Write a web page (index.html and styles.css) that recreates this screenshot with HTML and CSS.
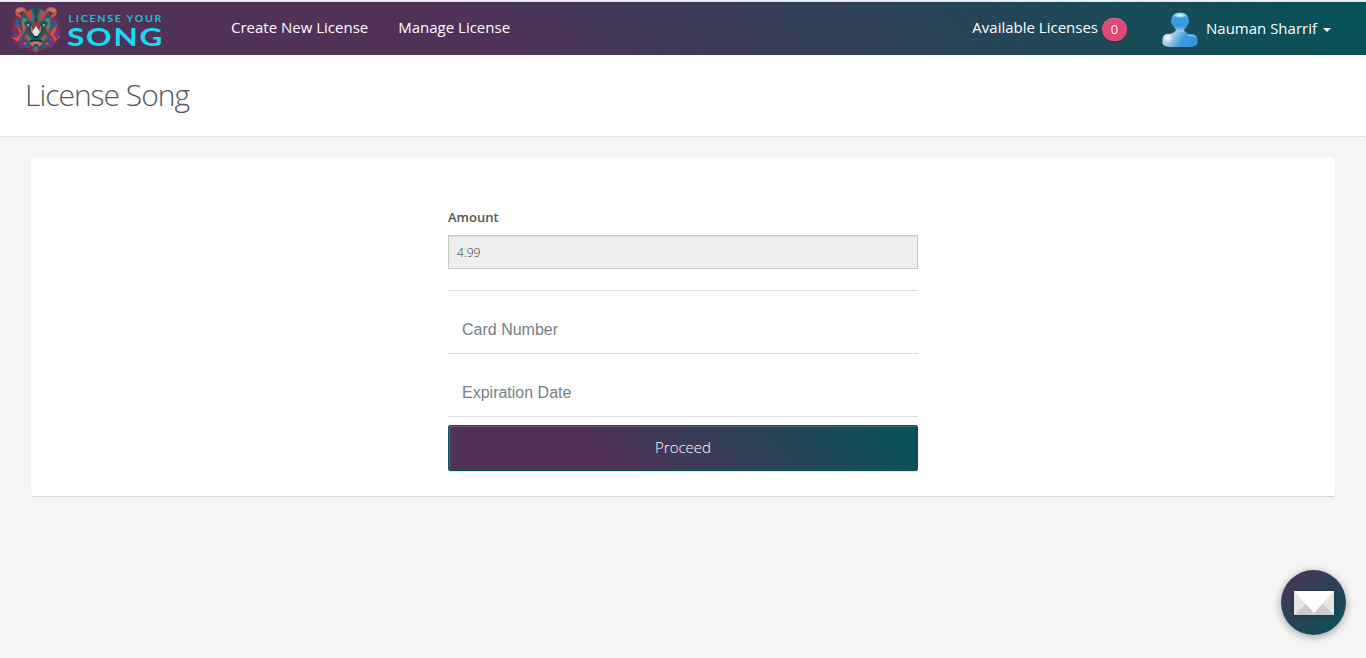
FILE: index.html
```html
<!DOCTYPE html>
<html lang="en">
<head>
<meta charset="utf-8">
<title>License Song</title>
<link rel="stylesheet" href="styles.css">
</head>
<body>
<header class="navbar">
  <a class="brand">
    <svg class="brand-logo" width="160" height="53" viewBox="4 2 160 53">
      <!-- mane -->
      <path fill="#8b294d" d="M17 15L12 21 14 25 11 30 14 33 10 38 16 40 13 44 20 44 18 49 26 47 31 52 36 53 42 51 46 47 53 48 51 44 58 43 56 39 62 37 57 33 61 30 57 26 60 22 55 15Z"/>
      <path fill="#315a8c" d="M17 17L14 25 23 32ZM54 17L58 25 49 32ZM20 37L13 42 25 41ZM49 37L58 42 48 42ZM27 44L21 48 31 48ZM44 45L51 47 40 49Z"/>
      <path fill="#d94b43" d="M15 24L23 33 22 37ZM58 24L49 33 53 38ZM12 38L22 34 18 42ZM60 37L52 31 54 42ZM23 42L21 46 29 43ZM48 42L52 46 43 44Z"/>
      <path fill="#623b8b" d="M11 31L20 34 16 38ZM61 31L53 34 57 39ZM17 44L25 39 22 48ZM55 44L47 39 50 48Z"/>
      <!-- ears -->
      <path fill="#c4544d" d="M16 15Q13 8 20 7 26 7 27 12L20 18ZM56 15Q59 8 52 7 46 7 45 12L52 18Z"/>
      <path fill="#b88682" d="M16 11Q18 7 24 9L19 12ZM56 11Q54 7 48 9L53 12Z"/>
      <path fill="#5b2d43" d="M19 13L24 11 22 17ZM53 13L48 11 50 17Z"/>
      <!-- face -->
      <path fill="#285b68" d="M25 12L32 8 40 8 47 12 52 20 50 35 45 44 36 50 27 44 22 35 20 20Z"/>
      <path fill="#b9483e" d="M31 9L25 13 29 20 35 24ZM41 9L47 13 43 20 37 24ZM21 20L27 27 23 35ZM51 20L45 27 49 35ZM27 33L30 42 24 37ZM45 33L42 42 48 37Z"/>
      <path fill="#35454f" d="M34 9L36 8 38 9 37 24 35 24ZM27 28L31 27 32 36 28 33ZM45 28L41 27 40 36 44 33Z"/>
      <path fill="#459087" d="M22 18L28 19 24 23 25 31 23 28ZM50 18L44 19 48 23 47 31 49 28ZM28 35L31 39 29 42ZM44 35L41 39 43 42Z"/>
      <path fill="#327d87" d="M31 10L35 17 32 22ZM41 10L37 17 40 22Z"/>
      <path fill="#87443e" d="M33 20L36 23 39 20 40 29 36 27 32 29Z"/>
      <path fill="#1c2c35" d="M26 22L32 25 28 27ZM46 22L40 25 44 27ZM32 34L36 36 40 34 38 38 34 38ZM29 41L35 39 36 41 30 42ZM43 41L37 39 36 41 42 42Z"/>
      <path fill="#c7dfda" d="M27 23.500L30 25 28 26.500ZM45 23.500L42 25 44 26.500Z"/>
      <path fill="#d8e7df" d="M36 26L40 32 37.500 36H34.500L32 32Z"/>
      <path fill="#cf6d52" d="M29 43L35 41 33 47ZM43 43L37 41 39 47ZM31 25L33 30 31 33ZM41 25L39 30 41 33Z"/>
      <path fill="#b8a89c" d="M33 43L36 42 39 43 36 44Z"/>
      <path fill="#4b7378" d="M34 47L38 47 38 50 36 52 33 50Z"/>
      <text class="logo-small" transform="translate(68.500 21.500) scale(1.120 1)" textLength="83" lengthAdjust="spacing">LICENSE YOUR</text>
      <text class="logo-large" transform="translate(67 46) scale(1.240 1)" textLength="77" lengthAdjust="spacing">SONG</text>
    </svg>
  </a>
  <nav class="main-links">
    <a>Create New License</a>
    <a>Manage License</a>
  </nav>
  <div class="account">
    <a class="available">Available Licenses<span class="badge">0</span></a>
    <a class="profile">
      <svg class="avatar" width="36" height="36" viewBox="0 0 36 36">
        <defs>
          <linearGradient id="head" x1="0" y1="0" x2="0" y2="1">
            <stop offset="0" stop-color="#8dcaf0"/><stop offset=".3" stop-color="#3d9edc"/><stop offset=".7" stop-color="#3598d9"/><stop offset="1" stop-color="#a5d4f2"/>
          </linearGradient>
          <linearGradient id="torso" x1="0" y1=".2" x2="1" y2=".5">
            <stop offset="0" stop-color="#c7d9f4"/><stop offset=".3" stop-color="#a4c8ee"/><stop offset=".65" stop-color="#3b9bda"/><stop offset="1" stop-color="#3295d7"/>
          </linearGradient>
          <radialGradient id="shine"><stop stop-color="#fff"/><stop offset="1" stop-color="#fff" stop-opacity="0"/></radialGradient>
        </defs>
        <path fill="url(#torso)" d="M13 19Q11 22 6 22 1 22 .5 27V31Q1 35 10 35H26Q35 35 35.500 31V27Q35 22 29 22 24 22 23 19Z"/>
        <path fill="url(#head)" d="M18 .5Q26 .5 26.500 7 28 10 26.500 11.500 25 15 22.500 17 23 20 18 20 13 20 13.500 17 11 14 9.500 11.500 8 10 9.500 7 10 .5 18 .5Z"/>
        <ellipse cx="18" cy="3.500" rx="6.500" ry="2.500" fill="url(#shine)"/>
        <circle cx="6" cy="26" r="5" fill="url(#shine)"/>
        <path d="M26 23.500Q31 22.500 33.500 25" fill="none" stroke="#a9d5f3"/>
      </svg>
      <span class="user-name">Nauman Sharrif</span><span class="caret"></span>
    </a>
  </div>
</header>
<div class="page-title"><h1>License Song</h1></div>
<main class="content">
  <section class="panel">
    <form class="payment">
      <label class="amount-label">Amount</label>
      <input class="amount" value="4.99" readonly>
      <div class="card-field first">Card Number</div>
      <div class="card-field">Expiration Date</div>
      <button class="proceed" type="button">Proceed</button>
    </form>
  </section>
</main>
<a class="mail">
  <svg width="40" height="24" viewBox="0 0 40 24">
    <path fill="#e6e6e6" d="M0 0H40V24H0Z"/>
    <path fill="#ccc" d="M0 24L13 12H27L40 24Z"/>
    <path fill="#fff" d="M0 0H40L20 22Z"/>
  </svg>
</a>
</body>
</html>
```
FILE: styles.css
```css
* { box-sizing: border-box; }
body {
  margin: 0;
  height: 658px;
  overflow: hidden;
  background: #f5f5f5;
  border-top: 2px solid #e9e9ef;
  border-bottom: 1px solid #fff;
  font-family: "Open Sans", sans-serif;
  color: #555;
}
.navbar {
  display: flex;
  height: 53px;
  background: linear-gradient(45deg, #503257 34%, #055457 100%);
  color: #fff;
  font-size: 15px;
}
.brand { padding-left: 4px; width: 231px; }
.brand-logo { display: block; }
.logo-small { font: 700 9.500px Lato, sans-serif; fill: #24bdd8; }
.logo-large { font: 700 25.500px Lato, sans-serif; fill: #15dcf0; }
.main-links { display: flex; gap: 30px; line-height: 51px; }
.account { display: flex; margin-left: auto; padding-right: 35px; }
.available { display: flex; align-items: center; height: 51px; gap: 4px; margin-right: 35px; line-height: 51px; }
.badge {
  width: 25px;
  height: 23px;
  margin-top: 3px;
  border-radius: 12px;
  background: #e14675;
  box-shadow: inset 0 1px rgba(255,255,255,.2), 0 1px 1px rgba(0,0,0,.15);
  text-align: center;
  font-size: 13px;
  line-height: 22px;
}
.profile { display: flex; align-items: center; height: 52px; }
.avatar { margin: 4px 8px 0 0; }
.user-name { line-height: 52px; }
.caret { margin: 3px 0 0 6px; border: 4px solid transparent; border-top-color: #fff; border-bottom: 0; }
.page-title {
  height: 82px;
  padding: 19px 25px 0;
  background: #fff;
  border-bottom: 1px solid #e4e4e4;
}
.page-title h1 { margin: 0; font-size: 30px; line-height: 41px; font-weight: 300; letter-spacing: -1px; }
.content { padding: 20px 31px; }
.panel {
  height: 339px;
  background: #fff;
  border-radius: 2px;
  box-shadow: 0 1px 1px rgba(0,0,0,.15);
}
.payment { width: 470px; margin: 0 auto; padding-top: 50px; display: flex; flex-direction: column; }
.amount-label { font-size: 13px; line-height: 20px; font-weight: 600; }
.amount {
  height: 34px;
  margin: 8px 0 21px;
  padding: 0 8px;
  border: 1px solid #c7c7c7;
  border-radius: 0;
  background: #eee;
  box-shadow: inset 0 1px 1px rgba(0,0,0,.075);
  color: #333;
  font: 300 12px "Open Sans", sans-serif;
}
.card-field {
  height: 63px;
  padding: 15px 14px 0;
  border-bottom: 1px solid #ddd;
  font: 16px/48px "Liberation Sans", sans-serif;
  color: #757f86;
}
.card-field.first { height: 64px; border-top: 1px solid #ddd; }
.proceed {
  height: 46px;
  margin-top: 8px;
  padding: 0 6px 2px;
  border: 1px solid #055457;
  border-radius: 2px;
  background: linear-gradient(45deg, #503257 34%, #055457 100%);
  box-shadow: inset 1px 1px rgba(255,255,255,.2), 0 1px 1px rgba(0,0,0,.1);
  color: #fff;
  font: 300 15px "Open Sans", sans-serif;
}
.mail {
  position: fixed;
  right: 20px;
  bottom: 23px;
  width: 65px;
  height: 65px;
  display: flex;
  align-items: center;
  justify-content: center;
  border-radius: 50%;
  background: linear-gradient(145deg, #503257 0%, #055457 100%);
  box-shadow: 0 2px 8px rgba(0,0,0,.35);
}
.mail svg { filter: drop-shadow(0 1px 2px rgba(0,0,0,.25)); }
```
